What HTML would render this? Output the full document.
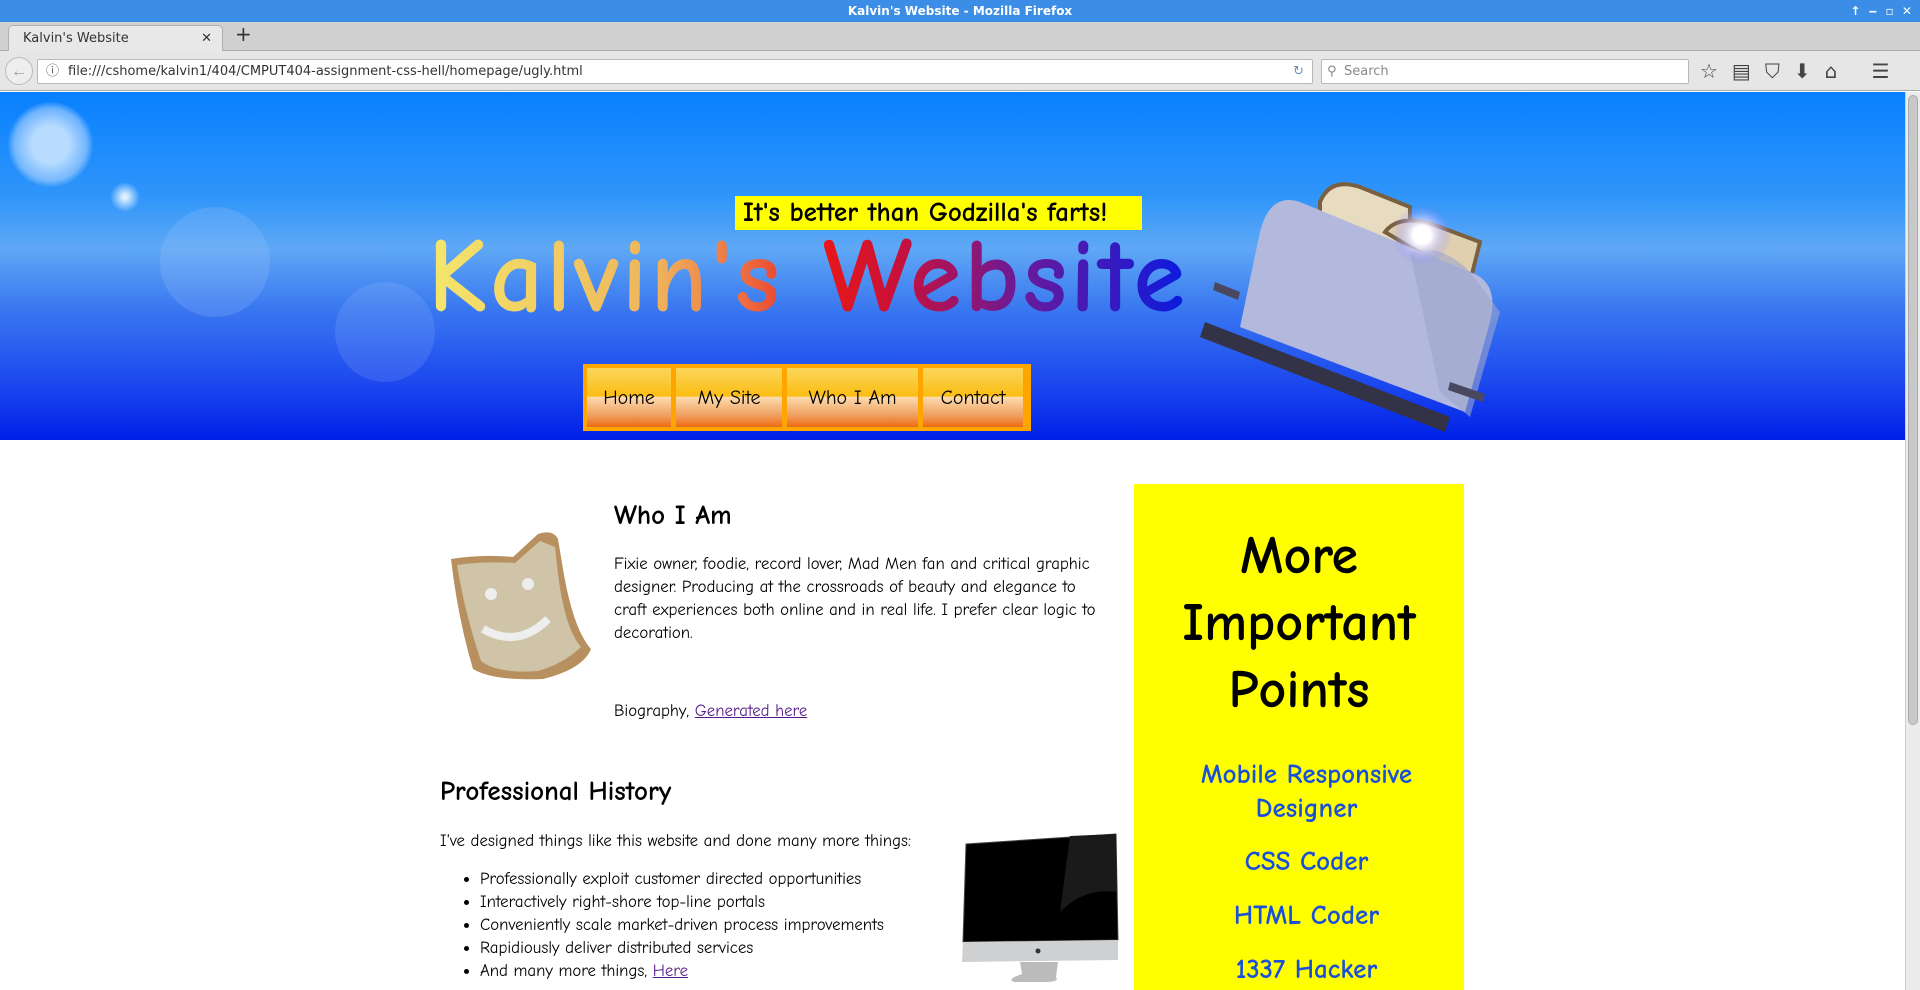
<!DOCTYPE html>
<html><head><meta charset="utf-8"><style>
*{margin:0;padding:0;box-sizing:border-box}
body{width:1920px;height:990px;overflow:hidden;background:#fff;font-family:"Comic Sans MS","Comic Neue","Liberation Sans",cursive,sans-serif;position:relative}
.a{position:absolute}
#title{left:0;top:0;width:1920px;height:22px;background:#3b8de6;color:#fff;font:bold 12px "DejaVu Sans",sans-serif;text-align:center;line-height:22px}
#tabs{left:0;top:22px;width:1920px;height:29px;background:#d0d0d0;border-bottom:1px solid #aaa}
#tab{left:8px;top:3px;width:215px;height:27px;background:#e8e8e8;border:1px solid #b0b0b0;border-bottom:none;border-radius:5px 5px 0 0;font:13px "DejaVu Sans",sans-serif;color:#333;padding:5px 14px}
#nav{left:0;top:51px;width:1920px;height:40px;background:#e6e6e6;border-bottom:1px solid #aaa}
.box{background:#fff;border:1px solid #b8b8b8;border-radius:2px;height:25px;top:8px;font:13px "DejaVu Sans",sans-serif;color:#333;line-height:23px}
#hdr{left:0;top:92px;width:1905px;height:348px;background:linear-gradient(#0880ff 0%,#2f95fa 30%,#5fa8f5 45%,#3a78f0 62%,#1a45ee 85%,#0020e8 100%);overflow:hidden}
.flare{position:absolute;border-radius:50%}
#tag{left:735px;top:196px;width:407px;height:34px;background:#ff0;font-size:27px;font-weight:bold;line-height:34px;padding-left:8px;color:#000;white-space:nowrap}
#big{left:428px;top:213px;font-size:105px;font-weight:bold;white-space:nowrap;letter-spacing:3px;background:linear-gradient(90deg,#f3e76c 0%,#efb45c 30%,#ee6a40 42%,#e81818 52%,#c8103a 62%,#6a1a9a 78%,#0a1ae0 100%);-webkit-background-clip:text;background-clip:text;color:transparent;line-height:130px}
#menu{left:583px;top:364px;height:67px;width:448px;background:#fea500;display:flex;padding:4px;gap:5px}
#menu div{background:linear-gradient(#fbd65c 0%,#fbbd12 48%,#fcdcb0 49%,#f0a060 80%,#ee6a10 100%);font-size:20px;display:flex;align-items:center;justify-content:center;color:#000}
.p{font-size:16.8px;line-height:23px;color:#000}
h2{font-weight:bold;font-size:27px;position:absolute;white-space:nowrap}
a{color:#551a8b;text-decoration:underline}
#side{left:1134px;top:484px;width:330px;height:506px;background:#ff0;text-align:center}
#side h1{font-size:54px;line-height:67px;margin-top:38px}
.bl{color:#1a50d8;font-size:27px;font-weight:bold;line-height:34px;position:absolute;left:0;width:345px;text-align:center}
</style></head><body>
<div id="title" class="a">Kalvin's Website - Mozilla Firefox<span style="position:absolute;right:8px;font-size:12px">↑ &nbsp;‒ &nbsp;▫ &nbsp;✕</span></div>
<div id="tabs" class="a"><div id="tab" class="a">Kalvin's Website<span style="position:absolute;right:10px">✕</span></div><div class="a" style="left:235px;top:0;font:20px 'DejaVu Sans';color:#333">+</div></div>
<div id="nav" class="a">
 <div class="a" style="left:5px;top:6px;width:28px;height:28px;border-radius:50%;border:1px solid #bbb;background:#eee;color:#999;text-align:center;line-height:26px;font-size:16px">←</div>
 <div class="a box" style="left:37px;width:1276px;padding-left:30px"><span class="a" style="left:8px;top:0;color:#555">ⓘ</span>file:///cshome/kalvin1/404/CMPUT404-assignment-css-hell/homepage/ugly.html<span class="a" style="right:8px;top:0;color:#6a8fb8">↻</span></div>
 <div class="a box" style="left:1321px;width:368px;padding-left:22px;color:#888"><span class="a" style="left:5px;top:0">⚲</span>Search</div>
 <div class="a" style="left:1700px;top:8px;font:20px 'DejaVu Sans';color:#444;letter-spacing:14px;white-space:nowrap">☆▤⛉⬇⌂ ☰</div>
</div>
<div id="hdr" class="a">
 <div class="flare" style="left:8px;top:10px;width:85px;height:85px;background:radial-gradient(#b8dcff 30%,rgba(200,225,255,.5) 60%,rgba(255,255,255,0) 72%)"></div>
 <div class="flare" style="left:110px;top:90px;width:30px;height:30px;background:radial-gradient(#dfefff 10%,rgba(255,255,255,0) 70%)"></div>
 <div class="flare" style="left:160px;top:115px;width:110px;height:110px;background:rgba(180,210,255,.18)"></div>
 <div class="flare" style="left:335px;top:190px;width:100px;height:100px;background:rgba(180,210,255,.15)"></div>
 <svg class="a" style="left:1200px;top:40px" width="310" height="310" viewBox="0 0 310 310">
  <defs><radialGradient id="g"><stop offset="0" stop-color="#fff"/><stop offset=".3" stop-color="#fff"/><stop offset="1" stop-color="#8080ff" stop-opacity="0"/></radialGradient></defs>
  <path d="M120 70 Q130 45 160 55 L210 75 L210 120 L120 90Z" fill="#e8dcc0" stroke="#7a6040" stroke-width="4"/>
  <path d="M185 100 Q200 80 240 95 L280 110 L270 150 Z" fill="#e0d0b0" stroke="#7a6040" stroke-width="4"/>
  <path d="M60 100 Q70 60 100 70 L270 140 Q300 150 290 190 L265 280 L40 195 Z" fill="#b3b9dc"/>
  <path d="M210 120 Q240 110 270 140 L300 180 L270 285 L240 260Z" fill="#9da5cc" opacity=".6"/>
  <path d="M5 190 L250 285 L245 300 L0 205Z" fill="#343247"/>
  <path d="M15 150 L40 160 L38 168 L13 158Z M250 250 L285 262 L283 270 L248 258Z" fill="#4a4860"/>
  <circle cx="222" cy="103" r="30" fill="url(#g)"/>
 </svg>
</div>
<div id="tag" class="a">It's better than Godzilla's farts!</div>
<div id="big" class="a">Kalvin's Website</div>
<div id="menu" class="a"><div style="width:84px">Home</div><div style="width:106px">My Site</div><div style="width:131px">Who I Am</div><div style="width:100px">Contact</div></div>

<svg class="a" style="left:443px;top:529px" width="152" height="152" viewBox="0 0 152 152"><path d="M8 30 Q40 25 70 28 L95 5 Q110 0 115 10 L120 40 Q130 100 148 120 Q140 140 100 150 Q50 152 30 140 Q15 90 8 30Z" fill="#b89060"/><path d="M14 36 Q40 32 72 34 L97 12 L112 18 L115 45 Q122 100 138 118 Q120 135 95 142 Q55 145 38 132 Q22 85 14 36Z" fill="#cfc4a8"/><circle cx="48" cy="65" r="6" fill="#eee"/><circle cx="85" cy="55" r="6" fill="#eee"/><path d="M40 100 Q75 120 105 90" stroke="#eee" stroke-width="8" fill="none"/></svg>
<h2 style="left:614px;top:500px">Who I Am</h2>
<div class="a p" style="left:614px;top:553px;width:495px">Fixie owner, foodie, record lover, Mad Men fan and critical graphic designer. Producing at the crossroads of beauty and elegance to craft experiences both online and in real life. I prefer clear logic to decoration.</div>
<div class="a p" style="left:614px;top:700px">Biography, <a>Generated here</a></div>
<h2 style="left:440px;top:776px">Professional History</h2>
<div class="a p" style="left:440px;top:830px">I've designed things like this website and done many more things:</div>
<ul class="a p" style="left:480px;top:868px;list-style:disc">
<li>Professionally exploit customer directed opportunities</li>
<li>Interactively right-shore top-line portals</li>
<li>Conveniently scale market-driven process improvements</li>
<li>Rapidiously deliver distributed services</li>
<li>And many more things, <a>Here</a></li>
</ul>
<svg class="a" style="left:960px;top:832px" width="160" height="150" viewBox="0 0 160 150"><path d="M6 12 L156 2 L158 108 L3 110Z" fill="#000" stroke="#444"/><path d="M3 110 L158 108 L158 128 L2 130Z" fill="#cfd0d2"/><circle cx="78" cy="119" r="2.5" fill="#333"/><path d="M60 130 L98 130 L96 145 Q100 150 85 150 L55 150 Q45 148 62 142Z" fill="#bbb"/><path d="M110 4 L156 2 L157 60 Q125 55 100 80Z" fill="#1a1a1a"/></svg>

<div id="side" class="a"><h1>More<br>Important<br>Points</h1>
<div class="bl" style="top:274px">Mobile Responsive<br>Designer</div>
<div class="bl" style="top:361px">CSS Coder</div>
<div class="bl" style="top:415px">HTML Coder</div>
<div class="bl" style="top:469px">1337 Hacker</div>
</div>
<div class="a" style="left:1905px;top:92px;width:15px;height:898px;background:#ececec;border-left:1px solid #ccc"><div style="margin:3px 2px;height:630px;background:#c8c8c8;border-radius:5px;border:1px solid #aaa"></div></div>
</body></html>
